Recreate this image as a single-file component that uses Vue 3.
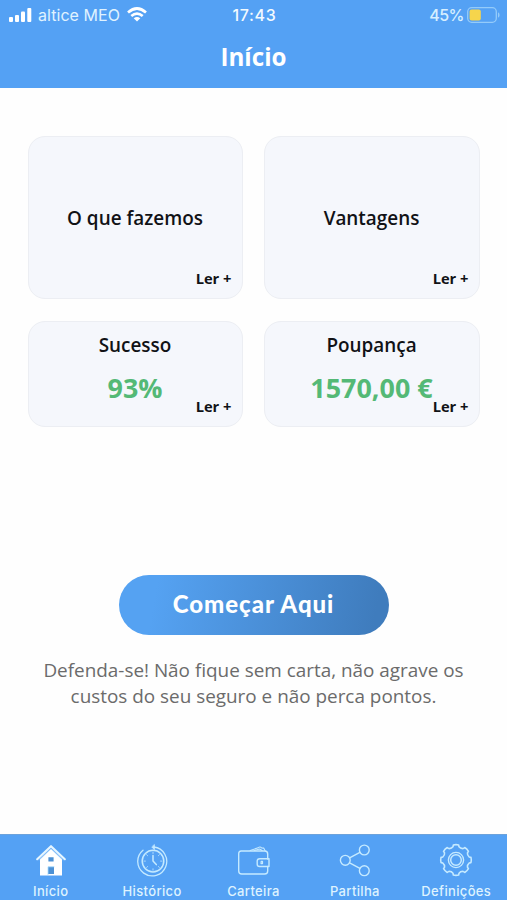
<script setup>
const topCards = [{ title: 'O que fazemos' }, { title: 'Vantagens' }]
const statCards = [
  { title: 'Sucesso', value: '93%' },
  { title: 'Poupança', value: '1570,00 €' },
]
const tabs = [
  { id: 'home', label: 'Início' },
  { id: 'history', label: 'Histórico' },
  { id: 'wallet', label: 'Carteira' },
  { id: 'share', label: 'Partilha' },
  { id: 'settings', label: 'Definições' },
]

// Outline of an eight-toothed gear centred on (17, 17)
function gearPath() {
  const point = (r, deg) => {
    const a = (deg * Math.PI) / 180
    return `${(17 + r * Math.cos(a)).toFixed(2)} ${(17 + r * Math.sin(a)).toFixed(2)}`
  }
  let d = `M${point(15.2, -10)}`
  for (let i = 0; i < 8; i++) {
    const c = i * 45
    d += `Q${point(15.7, c)} ${point(15.2, c + 10)}`
    d += `L${point(13.5, c + 13)}Q${point(12.1, c + 22.5)} ${point(13.5, c + 32)}`
    d += `L${point(15.2, c + 35)}`
  }
  return d + 'Z'
}
const gear = gearPath()
</script>

<template>
  <div class="screen">
    <header class="header">
      <div class="status">
        <div class="carrier">
          <svg class="signal" width="23" height="14" viewBox="0 0 23 14" fill="#fff">
            <rect x="0" y="9" width="4" height="5" rx="1" />
            <rect x="6" y="7" width="4" height="7" rx="1" />
            <rect x="12" y="3.5" width="4" height="10.5" rx="1" />
            <rect x="18.3" y="0" width="4" height="14" rx="1" />
          </svg>
          <span class="carrier-name">altice MEO</span>
          <svg class="wifi" width="20" height="15" viewBox="0 0 20 15" fill="none" stroke="#fff" stroke-width="2.7">
            <path d="M1 5.4Q10-2.4 19 5.4" />
            <path d="M4.3 9Q10 4.2 15.7 9" />
            <path d="M10 14.5L6.7 11.2Q10 8.6 13.3 11.2Z" fill="#fff" stroke="none" />
          </svg>
        </div>
        <span class="clock">17:43</span>
        <div class="power">
          <span class="percent">45%</span>
          <svg width="33" height="16" viewBox="0 0 33 16">
            <rect x="0.7" y="0.7" width="28.6" height="14.6" rx="4" fill="none" stroke="#94cbfa" stroke-width="1.3" />
            <rect x="2.6" y="2.6" width="11.2" height="10.8" rx="2" fill="#f6d54c" />
            <path d="M31 5.3Q32.6 6 32.6 8T31 10.7Z" fill="#94cbfa" />
          </svg>
        </div>
      </div>
      <h1 class="title">Início</h1>
    </header>

    <main class="content">
      <section class="grid">
        <article v-for="card in topCards" :key="card.title" class="card intro">
          <h2 class="card-title">{{ card.title }}</h2>
          <span class="more">Ler +</span>
        </article>
        <article v-for="card in statCards" :key="card.title" class="card stat">
          <h2 class="card-title">{{ card.title }}</h2>
          <strong class="value">{{ card.value }}</strong>
          <span class="more">Ler +</span>
        </article>
      </section>
      <button class="start">Começar Aqui</button>
      <p class="note">Defenda-se! Não fique sem carta, não agrave os<br />custos do seu seguro e não perca pontos.</p>
    </main>

    <nav class="tabs">
      <a v-for="tab in tabs" :key="tab.id" class="tab">
        <svg class="icon" width="34" height="34" viewBox="0 0 34 34" fill="none" stroke="#c5eaff" stroke-width="1.4" stroke-linecap="round" stroke-linejoin="round">
          <g v-if="tab.id === 'home'">
            <path d="M6 16L17 5.5 28 16V32.5H6Z" fill="#fff" stroke="none" />
            <path d="M3.2 16.2L17 3.2 30.8 16.2" stroke="#e6f6ff" stroke-width="2.2" />
            <path d="M5 17.2L17 5.9 29 17.2" stroke="#8cc5fa" stroke-width=".6" />
            <path d="M14.4 14.2H19.6V18.6H14.4Z M14 23.8H20V31H14Z" fill="#4c91d5" stroke="none" />
            <path d="M14 31.5V23.8H20" stroke="#a8dcff" stroke-width=".8" />
          </g>
          <g v-else-if="tab.id === 'history'" stroke-width="1.3">
            <path d="M19 4A14.5 14.5 0 1 1 8 7.2" />
            <path d="M19.4 1.9V6.6L17 4.2Z" fill="#c5eaff" stroke-width=".8" />
            <circle cx="18" cy="18.1" r="10.8" stroke-width="1.5" />
            <path d="M18 12.5V18.1L21.3 21.6" stroke-width="1.5" />
            <path d="M18 9V10.5M18 25.8V27.3M8.9 18.1H10.4M25.6 18.1H27.1M11.6 11.7L12.6 12.7M24.4 11.7L23.4 12.7M11.6 24.5L12.6 23.5M24.4 24.5L23.4 23.5" stroke-width=".8" />
          </g>
          <g v-else-if="tab.id === 'wallet'" transform="translate(.7 0)">
            <path d="M31 16V11Q31 8 28 8H4.5Q2 8 2 11V28Q2 31 5 31H28Q31 31 31 28V23.5" />
            <path d="M13.5 7.5L21.4 4.8Q23.4 3 25 5L27 5.1 28.5 8M17.5 7.5L23 6 25.4 7.5" stroke-width="1.1" />
            <path d="M32.3 15.8H23Q20.5 15.8 20.5 18V21.2Q20.5 23.5 23 23.5H32.3Z" />
            <path d="M24.5 18.4H25.8V20.6H24.3Z" stroke-width="1.2" />
          </g>
          <g v-else-if="tab.id === 'share'">
            <circle cx="7.3" cy="17.3" r="4.9" />
            <circle cx="26.3" cy="7" r="4.9" />
            <circle cx="26.3" cy="27.7" r="4.9" />
            <path d="M11.6 14.9L21.9 9.3M11.6 19.8L21.9 25.4" />
          </g>
          <g v-else>
            <path :d="gear" stroke-width="1.6" />
            <circle cx="17" cy="17" r="7.6" stroke-width="1.4" />
            <circle cx="17" cy="17" r="5.3" stroke-width="1.5" />
          </g>
        </svg>
        <span class="label">{{ tab.label }}</span>
      </a>
    </nav>
  </div>
</template>

<style>
body {
  margin: 0;
}
</style>

<style scoped>
.screen {
  display: flex;
  flex-direction: column;
  box-sizing: border-box;
  width: 507px;
  height: 900px;
  background: #fefefe;
  font-family: 'Open Sans', sans-serif;
  overflow: hidden;
}
.header {
  box-sizing: border-box;
  height: 88px;
  flex: none;
  background: #54a1f4;
  color: #fff;
}
.status {
  display: grid;
  grid-template-columns: 1fr auto 1fr;
  align-items: center;
  height: 28px;
  padding: 0 7px 0 9px;
  font: 500 16px/28px Inter, sans-serif;
}
.carrier,
.power {
  display: flex;
  align-items: center;
  height: 28px;
}
.carrier-name {
  margin: 1px 7px 0 6px;
  color: #e0f3ff;
  font-weight: 400;
  letter-spacing: 0.05px;
}
.clock {
  padding-top: 1px;
  color: #f2faff;
  letter-spacing: 0.65px;
}
.power {
  justify-content: flex-end;
  gap: 3px;
}
.percent {
  padding-top: 1px;
  color: #d6efff;
  letter-spacing: -0.5px;
}
.title {
  margin: 12px 0 0;
  text-align: center;
  font-size: 24.2px;
  line-height: 34px;
  font-weight: 700;
}
.content {
  display: flex;
  flex-direction: column;
  align-items: center;
  flex: 1;
  padding-top: 48px;
}
.grid {
  display: grid;
  grid-template-columns: 215px 216px;
  grid-template-rows: 163px 106px;
  gap: 22px 21px;
}
.card {
  display: flex;
  flex-direction: column;
  align-items: center;
  box-sizing: border-box;
  border: 1px solid #eceef3;
  border-radius: 17px;
  background: #f5f7fc;
  color: #111216;
}
.card-title {
  margin: 0;
  font-size: 18.9px;
  line-height: 26px;
  font-weight: 600;
}
.intro {
  padding-top: 68px;
}
.stat {
  padding-top: 10px;
}
.value {
  margin-top: 12px;
  color: #54b976;
  font-size: 26.9px;
  line-height: 36px;
  font-weight: 700;
}
.more {
  align-self: flex-end;
  margin-right: 10px;
  font-size: 14.7px;
  line-height: 20px;
  font-weight: 700;
}
.intro .more {
  margin-top: 37px;
}
.stat .more {
  margin-top: -10px;
}
.start {
  width: 270px;
  height: 60px;
  margin-top: 148px;
  padding: 0 0 2px;
  border: 0;
  border-radius: 30px;
  background: linear-gradient(100deg, #55a2f2 14%, #3f7cbd 94%);
  color: #fff;
  font: 900 24px/58px Lato, sans-serif;
  letter-spacing: 0.97px;
}
.note {
  margin: 22px 0 0;
  color: #6b6b6b;
  text-align: center;
  font-size: 18.9px;
  line-height: 26px;
}
.tabs {
  display: grid;
  grid-template-columns: repeat(5, 1fr);
  box-sizing: border-box;
  height: 66px;
  border-top: 1px solid #6ca2db;
  background: #54a1f4;
}
.tab {
  display: flex;
  flex-direction: column;
  align-items: center;
  padding-top: 8px;
  color: #def3ff;
}
.label {
  font: 500 13px/18px Inter, sans-serif;
  margin-top: 5px;
  letter-spacing: 0.35px;
}
</style>
